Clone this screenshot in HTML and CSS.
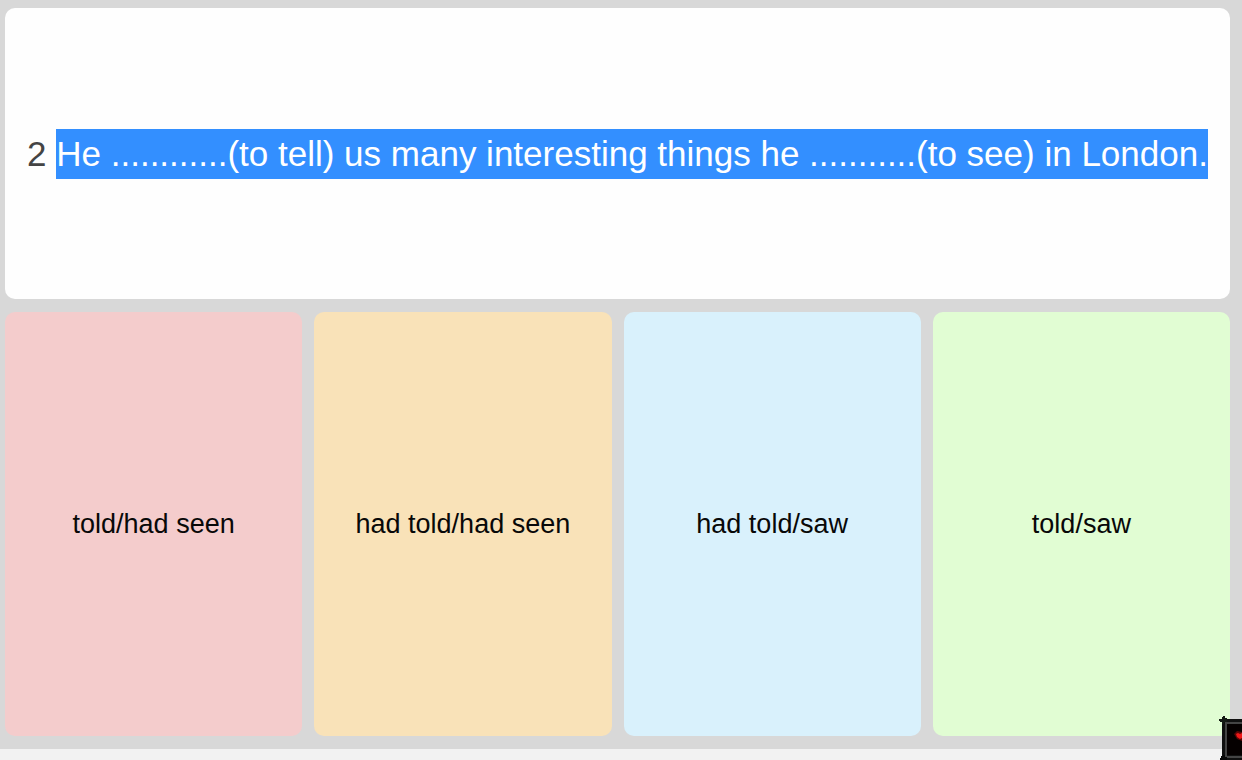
FILE: index.html
```html
<!DOCTYPE html>
<html lang="en">
<head>
<meta charset="utf-8">
<meta name="viewport" content="width=device-width, initial-scale=1">
<title>Quiz question</title>
<link rel="stylesheet" href="styles.css">
</head>
<body>
<main class="quiz">
  <section class="question">
    <h1 class="question-text">2 <mark class="selected">He ............(to tell) us many interesting things he ...........(to see) in London.</mark></h1>
  </section>
  <section class="options" aria-label="Answers">
    <button type="button" class="option option-pink">told/had seen</button>
    <button type="button" class="option option-orange">had told/had seen</button>
    <button type="button" class="option option-blue">had told/saw</button>
    <button type="button" class="option option-green">told/saw</button>
  </section>
</main>
<svg class="corner-widget" width="24" height="46" viewBox="0 0 24 46" aria-hidden="true">
  <rect x="4" y="5" width="20" height="41" fill="#101010"/>
  <path d="M8 43V9H24M8 43H24" fill="none" stroke="#444" stroke-width="2"/>
  <rect x="9" y="10" width="15" height="31" fill="#050000"/>
  <path d="M5 2h2v2h2v4h-3v2h-2v-2h-2v-1h-1v-2h3v-2h1z" fill="#141a14"/>
  <path d="M2 44h1v-2h2v-1h2v2h2v3h-7z" fill="#080808"/>
  <path d="M16 20l3-3 5 1v9l-5-2z" fill="#5c0505"/>
  <path d="M18 20l2-1 2 1 2-1v5l-2 1-3-2z" fill="#f01818"/>
</svg>
</body>
</html>
```
FILE: styles.css
```css
* {
  box-sizing: border-box;
}

body {
  margin: 0;
  min-height: 100vh;
  display: flex;
  flex-direction: column;
  padding-bottom: 11px;
  background: #f2f2f2;
  font-family: "Liberation Sans", Arial, sans-serif;
}

.quiz {
  flex: 1;
  display: grid;
  grid-template-rows: 291fr 424fr;
  gap: 13px;
  padding: 8px 12px 13px 5px;
  background: #d8d8d8;
}

.question {
  display: flex;
  align-items: center;
  justify-content: center;
  padding: 0 16px;
  border-radius: 10px;
  background: #fefefe;
}

.question-text {
  margin: 0;
  font-size: 35px;
  font-weight: 400;
  line-height: 50px;
  color: #444;
}

.selected {
  display: inline-block;
  background: #338fff;
  color: #fff;
}

.options {
  display: grid;
  grid-template-columns: repeat(4, 1fr);
  gap: 12px;
}

.option {
  border: 0;
  border-radius: 10px;
  padding: 0 12px;
  font-family: inherit;
  font-size: 27px;
  line-height: 32px;
  color: #080808;
  cursor: pointer;
}

.option-pink {
  background: #f4cccc;
}

.option-orange {
  background: #f9e2b8;
}

.option-blue {
  background: #d9f1fc;
}

.option-green {
  background: #e1fdd3;
}

.corner-widget {
  position: fixed;
  right: 0;
  bottom: 0;
}
```
